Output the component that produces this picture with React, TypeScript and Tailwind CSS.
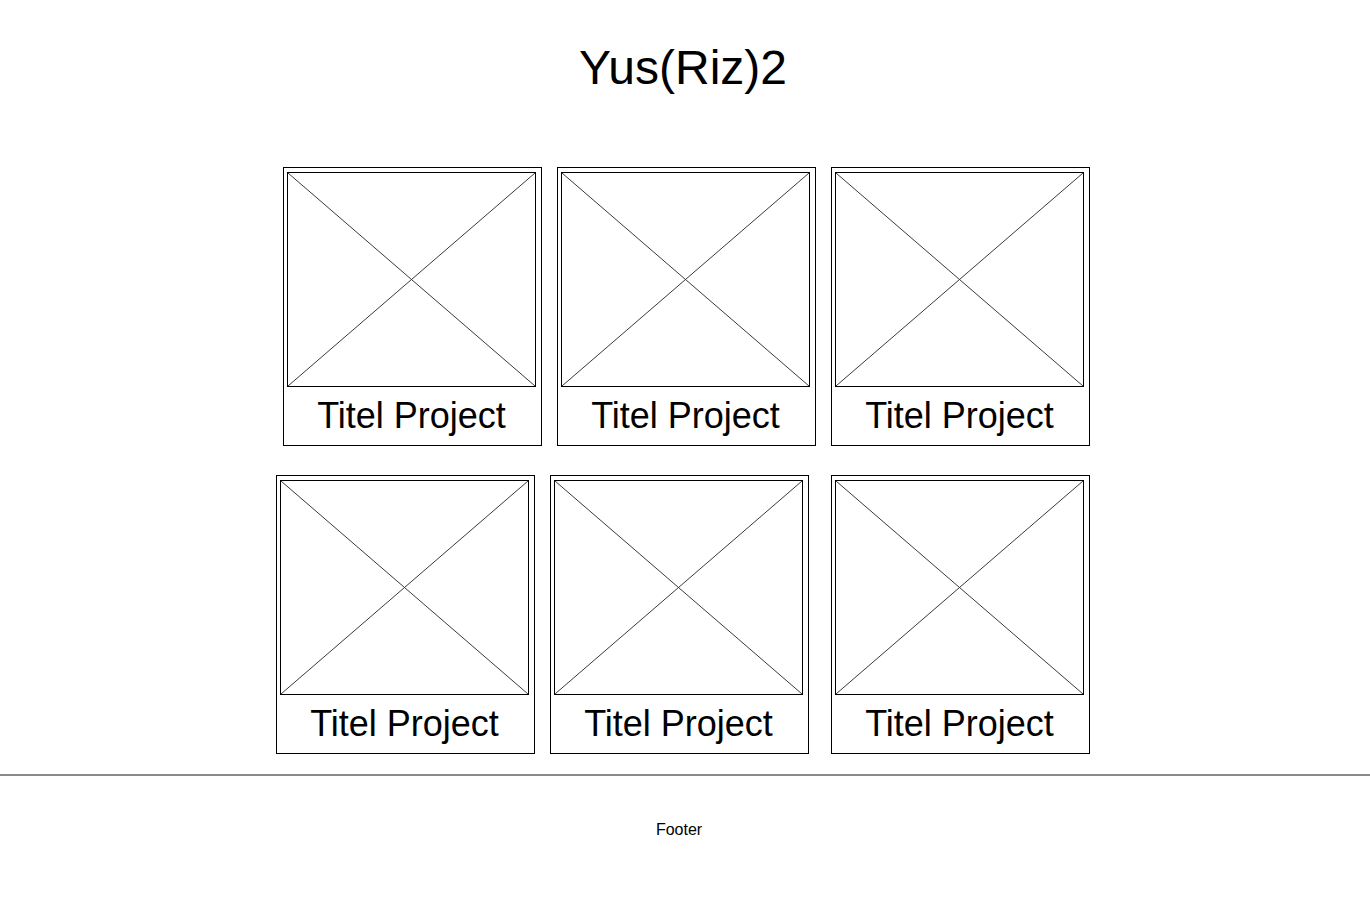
const rows = [
  { offsets: ["ml-[283px]", "ml-[15px]", "ml-[15px]"] },
  { offsets: ["ml-[276px]", "ml-[15px]", "ml-[22px]"] },
];

function Placeholder() {
  return (
    <div className="relative h-[215px] w-[249px] border border-black">
      <svg className="absolute inset-0 h-full w-full" viewBox="0 0 247 213" preserveAspectRatio="none">
        <line x1="0" y1="0" x2="247" y2="213" stroke="#3a3a3a" strokeWidth="1" />
        <line x1="247" y1="0" x2="0" y2="213" stroke="#3a3a3a" strokeWidth="1" />
      </svg>
    </div>
  );
}

function ProjectCard({ className }: { className: string }) {
  return (
    <div className={`w-[259px] border border-black pt-[4px] pl-[3px] pr-[5px] ${className}`}>
      <Placeholder />
      <p className="h-[58px] text-center text-[36px] leading-[58px] text-black">Titel Project</p>
    </div>
  );
}

export default function App() {
  return (
    <div className="min-h-[900px] bg-white font-['Liberation_Sans',Arial,sans-serif] text-black">
      {/* Header */}
      <h1 className="pt-[40px] pr-[4px] text-center text-[48px] leading-[55px] font-normal">Yus(Riz)2</h1>

      {/* Projects */}
      <div className="mt-[72px] flex flex-col gap-[29px]">
        {rows.map((row, r) => (
          <div key={r} className="flex">
            {row.offsets.map((o, i) => (
              <ProjectCard key={i} className={o} />
            ))}
          </div>
        ))}
      </div>

      {/* Footer */}
      <div className="mt-[20px] h-[2px] w-full bg-[#8a8a8a]" />
      <footer className="pt-[45px] pr-[12px] text-center text-[16px] leading-[18px]">Footer</footer>
    </div>
  );
}
